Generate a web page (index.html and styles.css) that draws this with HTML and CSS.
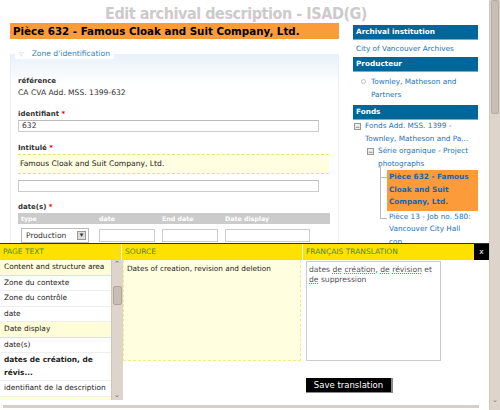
FILE: index.html
```html
<!DOCTYPE html>
<html lang="fr">
<head>
  <meta charset="UTF-8">
  <title>Edit archival description - ISAD(G)</title>
  <link rel="stylesheet" href="styles.css">
</head>
<body>
  <div class="window">
    <div class="page">
      <h1 class="page-title">Edit archival description - ISAD(G)</h1>
      <div class="layout">
        <div class="main">
          <h2 class="record-title">Pièce 632 - Famous Cloak and Suit Company, Ltd.</h2>

          <div class="zone">
            <div class="zone-legend"><span class="tri">▽</span>Zone d'identification</div>

            <div class="field first">
              <div class="label">référence</div>
              <div class="value">CA CVA Add. MSS. 1399-632</div>
            </div>

            <div class="field">
              <div class="label">identifiant <span class="req">*</span></div>
              <div class="input">632</div>
            </div>

            <div class="field">
              <div class="label">Intitulé <span class="req">*</span></div>
              <div class="source-text">Famous Cloak and Suit Company, Ltd.</div>
              <div class="input"></div>
            </div>

            <div class="field">
              <div class="label">date(s) <span class="req">*</span></div>
              <div class="date-table">
                <div class="date-head">
                  <span class="c-type">type</span>
                  <span class="c-date">date</span>
                  <span class="c-end">End date</span>
                  <span class="c-display">Date display</span>
                </div>
                <div class="date-row">
                  <div class="select">Production <span class="select-btn">▾</span></div>
                  <div class="box c-date"></div>
                  <div class="box c-end"></div>
                  <div class="box c-display"></div>
                </div>
              </div>
            </div>
          </div>
        </div>

        <div class="sidebar">
          <div class="side-head">Archival institution</div>
          <div class="side-link">City of Vancouver Archives</div>
          <div class="side-head">Producteur</div>
          <ul class="creators">
            <li>Townley, Matheson and Partners</li>
          </ul>
          <div class="side-head">Fonds</div>
          <div class="tree">
            <div class="node"><span class="minus">−</span><span>Fonds Add. MSS. 1399 - Townley, Matheson and Pa...</span></div>
            <div class="node sub"><span class="minus">−</span><span>Série organique - Project photographs</span></div>
            <div class="leaf current">Pièce 632 - Famous Cloak and Suit Company, Ltd.</div>
            <div class="leaf">Pièce 13 - Job no. 580: Vancouver City Hall con...</div>
          </div>
        </div>
      </div>
    </div>

    <div class="scrollbar">
      <div class="thumb"></div>
      <span class="arrow">⌄</span>
    </div>

    <div class="translate">
      <div class="t-head">
        <div class="t-col1">PAGE TEXT</div>
        <div class="t-col2">SOURCE</div>
        <div class="t-col3">FRANÇAIS TRANSLATION</div>
        <div class="t-close">x</div>
      </div>
      <div class="t-body">
        <div class="t-list">
          <ul>
            <li class="hl">Content and structure area</li>
            <li>Zone du contexte</li>
            <li>Zone du contrôle</li>
            <li>date</li>
            <li class="hl">Date display</li>
            <li>date(s)</li>
            <li class="active">dates de création, de révis...</li>
            <li>identifiant de la description</li>
            <li class="hl empty"></li>
          </ul>
          <div class="list-scroll">
            <span class="up">⌃</span>
            <div class="list-thumb"></div>
            <span class="down">⌄</span>
          </div>
        </div>
        <div class="t-source">
          <div class="source-box">Dates of creation, revision and deletion</div>
        </div>
        <div class="t-target">
          <div class="textarea">dates <u>de</u> <u>création</u>, <u>de</u> <u>révision</u> et <u>de</u> suppression</div>
          <button class="save">Save translation</button>
        </div>
      </div>
      <div class="hscroll"></div>
    </div>
  </div>
</body>
</html>
```

FILE: styles.css
```css
* {
  box-sizing: border-box;
}

body {
  margin: 0;
  font-family: 'DejaVu Sans', Verdana, sans-serif;
  font-size: 7.6px;
  color: #333;
  background: #fff;
}

.window {
  position: relative;
  display: flex;
  width: 500px;
  height: 410px;
  overflow: hidden;
}

.page {
  width: 489px;
  flex: none;
}

.page-title {
  margin: 5px 0 0 0;
  height: 18px;
  padding-left: 105px;
  font-family: 'DejaVu Sans Condensed', 'DejaVu Sans', sans-serif;
  font-size: 16px;
  font-weight: bold;
  letter-spacing: -0.45px;
  color: #cbcbcb;
  line-height: 18px;
  white-space: nowrap;
}

.layout {
  display: flex;
  padding-left: 10px;
}

.main {
  width: 329px;
}

.record-title {
  margin: 0;
  background: #fb9b3a;
  color: #000;
  font-size: 10.3px;
  font-weight: bold;
  height: 16px;
  line-height: 16px;
  padding-left: 3px;
}

/* fieldset */
.zone {
  position: relative;
  margin-top: 15px;
  height: 200px;
  padding: 0 0 0 7px;
  border-left: 1px solid #e8eff6;
  border-right: 1px solid #e8eff6;
  background: linear-gradient(#e7f0f9, #fff 30px);
}

.zone-legend {
  position: absolute;
  top: -6px;
  left: 4px;
  padding: 0 4px;
  background: #fff;
  color: #2f86c8;
  line-height: 11px;
}

.zone-legend .tri {
  color: #b8c4cf;
  font-size: 6px;
  margin-right: 8px;
}

.label {
  font-weight: bold;
  font-size: 7px;
  color: #333;
  line-height: 12px;
}

.req {
  color: #e00;
}

.value {
  line-height: 12px;
}

.field.first {
  padding-top: 21px;
}

.field + .field {
  margin-top: 9px;
}

.field:nth-of-type(4) {
  margin-top: 10px;
}

.field:nth-of-type(5) {
  margin-top: 9px;
}

.input {
  width: 301px;
  height: 12px;
  padding: 0 3px;
  border: 1px solid #ccc;
  border-top-color: #bbb;
  background: #fff;
  line-height: 10px;
  color: #333;
}

.source-text {
  width: 311px;
  height: 20px;
  margin-bottom: 6px;
  padding: 0 2px;
  background: #fffee0;
  border-top: 1px dashed #f0e070;
  border-bottom: 1px dashed #f0e070;
  line-height: 18px;
  color: #222;
}

.date-table {
  width: 312px;
}

.date-head {
  display: flex;
  height: 11px;
  background: #cbcbcb;
  color: #fff;
  font-weight: bold;
  font-size: 6.3px;
  line-height: 11px;
}

.date-head span,
.date-row > * {
  flex: none;
}

.c-type {
  width: 81px;
  padding-left: 3px;
}

.c-date,
.c-end {
  width: 63px;
}

.c-display {
  width: 86px;
}

.date-row {
  display: flex;
  gap: 7px;
  padding: 4px 0 0 3px;
}

.select {
  position: relative;
  width: 68px;
  height: 15px;
  margin-right: 3px;
  padding-left: 4px;
  border: 1px solid #bbb;
  line-height: 13px;
}

.select-btn {
  position: absolute;
  right: 2px;
  top: 2px;
  width: 9px;
  height: 9px;
  background: #ddd;
  border: 1px solid #999;
  font-size: 7px;
  line-height: 7px;
  text-align: center;
}

.box {
  height: 13px;
  margin-top: 1px;
  border: 1px solid #ccc;
}

.date-row .c-date,
.date-row .c-end {
  width: 56px;
}

.date-row .c-display {
  width: 85px;
}

/* context menu */
.sidebar {
  width: 125px;
  margin-left: 14px;
  margin-top: 2px;
  font-size: 7.3px;
}

.side-head {
  height: 15px;
  padding-left: 3px;
  background: #036699;
  border-bottom: 1px solid #7aaacc;
  color: #fff;
  font-weight: bold;
  line-height: 14px;
}

.side-link {
  height: 17px;
  padding: 2px 0 0 3px;
  color: #1b74c2;
  line-height: 13px;
}

.creators {
  margin: 0;
  padding: 3px 0 4px 0;
  list-style: none;
}

.creators li {
  position: relative;
  padding-left: 18px;
  color: #1b74c2;
  line-height: 13px;
}

.creators li::before {
  content: '';
  position: absolute;
  left: 8px;
  top: 4px;
  width: 3px;
  height: 3px;
  border: 1px solid #bbb;
  border-radius: 50%;
}

.tree {
  color: #1b74c2;
  line-height: 12.5px;
}

.node {
  display: flex;
  gap: 4px;
  padding-left: 1px;
}

.node.sub {
  padding-left: 14px;
}

.minus {
  flex: none;
  width: 7px;
  height: 7px;
  margin-top: 3px;
  border: 1px solid #999;
  background: #eee;
  color: #333;
  font-size: 6px;
  line-height: 5px;
  text-align: center;
}

.leaf {
  position: relative;
  margin-left: 34px;
  padding: 0 2px;
}

.leaf::before {
  content: '';
  position: absolute;
  left: -7px;
  top: -36px;
  width: 6px;
  height: 43px;
  border-left: 1px solid #bbb;
  border-bottom: 1px solid #bbb;
}

.leaf.current {
  margin-top: 0;
  padding: 1px 2px 2px 2px;
  background: #fb9b3a;
  color: #1565b0;
  font-weight: bold;
}

.leaf.current::before {
  top: -5px;
  height: 12px;
}

.scrollbar {
  position: relative;
  flex: none;
  width: 11px;
  background: #ddd4cb;
  border-left: 1px solid #cfc6bc;
}

.thumb {
  height: 114px;
  margin: 0 1px;
  background: #c9beb3;
  border: 1px solid #b9ada1;
  border-radius: 2px;
}

.arrow {
  position: absolute;
  bottom: 6px;
  left: 2px;
  font-size: 7px;
  color: #777;
}

/* translation panel */
.translate {
  position: absolute;
  left: 0;
  top: 243px;
  width: 489px;
  height: 167px;
  background: #fff;
  border-top: 1px solid #333;
}

.t-head {
  display: flex;
  height: 16px;
  background: #ffe100;
  color: #4d8a3a;
  font-size: 7.5px;
  line-height: 16px;
}

.t-col1 {
  width: 122px;
  padding-left: 3px;
  border-right: 1px solid #fff;
}

.t-col2 {
  width: 181px;
  padding-left: 3px;
  border-right: 1px solid #fff;
}

.t-col3 {
  width: 171px;
  padding-left: 3px;
}

.t-close {
  width: 15px;
  background: #000;
  color: #fff;
  text-align: center;
}

.t-body {
  display: flex;
  height: 145px;
}

.t-list {
  display: flex;
  width: 123px;
  height: 140px;
  overflow: hidden;
  font-size: 7.4px;
}

.t-list ul {
  width: 111px;
  margin: 0;
  padding: 0;
  list-style: none;
}

.t-list li {
  padding: 2px 4px;
  border-bottom: 1px solid #eee;
  color: #222;
  line-height: 10.5px;
}

.t-list li.hl {
  background: #fffcd8;
  border-bottom: 1px solid #ffe680;
}

.t-list li.empty {
  height: 15px;
}

.t-list li.active {
  padding: 1px 4px;
  font-weight: bold;
  line-height: 12.5px;
}

.list-scroll {
  position: relative;
  width: 12px;
  background: #ddd4cb;
  border-left: 1px solid #cfc6bc;
}

.list-thumb {
  position: absolute;
  top: 26px;
  left: 1px;
  width: 9px;
  height: 19px;
  background: #c9beb3;
  border: 1px solid #b2a699;
  border-radius: 2px;
}

.list-scroll .up,
.list-scroll .down {
  position: absolute;
  left: 2px;
  font-size: 7px;
  color: #666;
}

.list-scroll .up {
  top: 0;
}

.list-scroll .down {
  bottom: 1px;
}

.t-source {
  width: 180px;
}

.source-box {
  width: 178px;
  height: 101px;
  padding: 3px 3px;
  background: #ffffe0;
  border: 1px dashed #f5e88a;
  border-top: none;
  color: #222;
  font-size: 7.3px;
  line-height: 11px;
}

.t-target {
  width: 171px;
  padding: 1px 0 0 3px;
}

.textarea {
  width: 135px;
  height: 100px;
  padding: 3px 2px;
  border: 1px solid #ccc;
  color: #555;
  font-size: 7.6px;
  line-height: 10px;
}

.textarea u {
  text-decoration: underline dotted #e06060;
  text-underline-offset: 1px;
}

.save {
  display: block;
  width: 87px;
  height: 15px;
  margin-top: 17px;
  padding: 0;
  background: #000;
  color: #fff;
  border: none;
  border-right: 2px solid #888;
  border-bottom: 1px solid #888;
  font-family: 'DejaVu Sans', Verdana, sans-serif;
  font-size: 8.5px;
  line-height: 14px;
}

.hscroll {
  position: absolute;
  left: 3px;
  right: 10px;
  bottom: 2px;
  height: 3px;
  background: #d8d0c7;
}
```
